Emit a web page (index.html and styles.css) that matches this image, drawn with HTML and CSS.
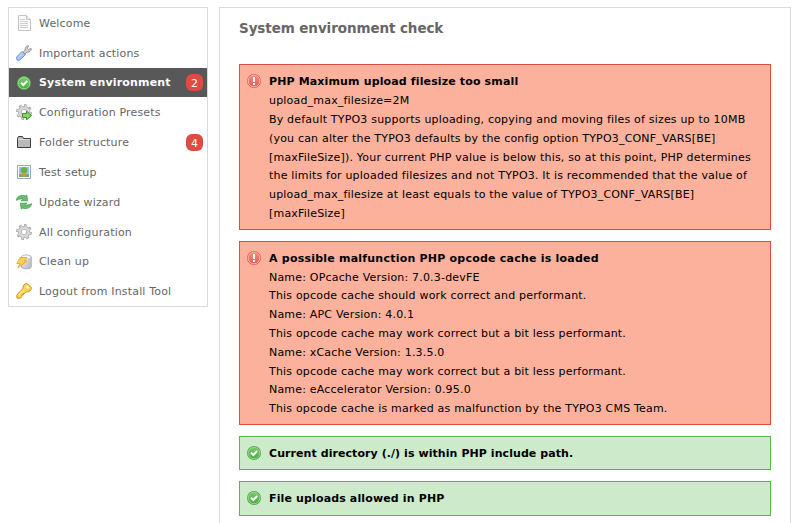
FILE: index.html
```html
<!DOCTYPE html>
<html lang="en">
<head>
<meta charset="utf-8">
<title>System environment check</title>
<link rel="stylesheet" href="styles.css">
</head>
<body>
<svg class="defs" width="0" height="0">
  <defs>
    <linearGradient id="green" x2="0" y2="1"><stop stop-color="#7bcc6c"/><stop offset="1" stop-color="#48ad3e"/></linearGradient>
    <linearGradient id="red" x2="0" y2="1"><stop stop-color="#f58b7c"/><stop offset="1" stop-color="#e45d50"/></linearGradient>
    <linearGradient id="grey" x2="1" y2="1"><stop stop-color="#f2f2f2"/><stop offset="1" stop-color="#b5b5b5"/></linearGradient>
    <linearGradient id="gold" x2="1" y2="1"><stop stop-color="#ffe77c"/><stop offset="1" stop-color="#f6c338"/></linearGradient>
    <symbol id="ok" viewBox="0 0 16 16"><circle cx="8" cy="8" r="7" fill="#52a74a"/><circle cx="8" cy="8" r="5.8" fill="url(#green)" stroke="#a5dc9b" stroke-width=".8"/><path d="M5 7.8 7.3 10 11.2 6" fill="none" stroke="#fff" stroke-width="2"/></symbol>
    <symbol id="error" viewBox="0 0 16 16"><circle cx="8" cy="8" r="7" fill="#db665b"/><circle cx="8" cy="8" r="5.8" fill="url(#red)" stroke="#f9b9ad" stroke-width=".9"/><path d="M8 4v5M8 10v2" stroke="#fff" stroke-width="2"/></symbol>
    <symbol id="gear" viewBox="0 0 16 16"><circle cx="8" cy="8" r="6.6" fill="none" stroke="#a3a3a3" stroke-width="2.6" stroke-dasharray="2.8 2.384"/><circle cx="8" cy="8" r="4.2" fill="none" stroke="#a3a3a3" stroke-width="4"/><circle cx="8" cy="8" r="6.2" fill="none" stroke="#d8d8d8" stroke-width="2" stroke-dasharray="1.6 3.27" stroke-dashoffset="-.5"/><circle cx="8" cy="8" r="4.1" fill="none" stroke="#d8d8d8" stroke-width="2.8"/></symbol>
  </defs>
</svg>
<div class="page">
  <ul class="menu">
    <li><svg viewBox="0 0 16 16"><path d="M2.5.5h8l4 4v11h-12z" fill="#fafafa" stroke="#c4c4c4"/><path d="M10.5.5v4h4" fill="#eee" stroke="#c4c4c4"/><path d="M4 4.5h5M4 6.5h8M4 8.5h8M4 10.5h8M4 12.5h8" stroke="#d0d0d0"/></svg><span>Welcome</span></li>
    <li><svg viewBox="0 0 16 16"><path d="m7.2 7.1 2-2c-.5-2 .8-4.2 3.3-4.3l-1.2 2.5 1.1 1.1 2.8-1c.3 2.8-2 4.2-4.2 3.6l-2 2z" fill="#d2d2d2" stroke="#8d8d8d" stroke-width=".9"/><path d="m6 6.4 3.4 3.4-5.6 5.1c-2 1.5-4.6-1-3.1-2.9z" fill="#a6c3f2" stroke="#668acb" stroke-width=".9"/><path d="m2.4 12.2 4.2-4" stroke="#d0e0fb"/></svg><span>Important actions</span></li>
    <li class="active"><svg viewBox="0 0 16 16"><use href="#ok"/></svg><span>System environment</span><b>2</b></li>
    <li><svg viewBox="0 0 16 16"><use href="#gear"/><path d="M6.5 9.5h4V7.1l5 4.4-5 4.3v-2.4h-4z" fill="#87d566" stroke="#398b2c"/></svg><span>Configuration Presets</span></li>
    <li><svg viewBox="0 0 16 16"><path d="M1.5 13.5v-9l1-2h4l1 2h7v9z" fill="#b9b9b9" stroke="#3e3e3e"/><path d="M2 5.5h12" stroke="#ddd"/></svg><span>Folder structure</span><b>4</b></li>
    <li><svg viewBox="0 0 16 16"><path d="M1.5 1.5h13v13h-13z" fill="#fff" stroke="#8eabd7"/><path d="M3 3h10v10H3z" fill="#9cc0ed"/><path d="M3 10h10v3H3z" fill="#78aa68"/><circle cx="8" cy="6.3" r="3.2" fill="#68b43f"/><path d="M7.2 9h1.6l1.4 2.2L8 13l-2.2-1.8z" fill="#e68a3e"/></svg><span>Test setup</span></li>
    <li><svg viewBox="0 0 16 16"><path id="arrow" d="M.6 6.4C.2 2.6 5.5.4 9.2 2l1.6-1 .8 5.8H5.2l2-1.5C4.8 4.6 2.2 5 .6 6.4z" fill="#6cbd74" stroke="#469c50" stroke-width=".8"/><use href="#arrow" transform="rotate(180 8 8)"/></svg><span>Update wizard</span></li>
    <li><svg viewBox="0 0 16 16"><use href="#gear"/></svg><span>All configuration</span></li>
    <li><svg viewBox="0 0 16 16"><path d="M5.5 2.5C7 .5 13 .5 15.2 2.5v10.8c-2 2-8 2-9.7 0z" fill="url(#grey)" stroke="#ababab"/><ellipse cx="10.4" cy="3" rx="4" ry="1.4" fill="#f7f7f7"/><path d="M4 3.5h7L8.2 7H11L1.8 14l2.1-4.5H.7z" fill="#ffd04a" stroke="#dda63a" stroke-width=".8"/></svg><span>Clean up</span></li>
    <li><svg viewBox="0 0 16 16"><path d="M7.1 5.2C6.7 2.4 8.5.5 11 .6l4.3 3.8c.4 2.7-2 5-4.8 4.4L9 10.3H7.4v1.6H5.8v1.7L4 15.2H1L.8 12.1z" fill="url(#gold)" stroke="#cd8e1b"/><path d="m10.8 3.3 1.7 1.7" stroke="#fff" stroke-width="2"/><path d="m2.4 12.3 5-5.2" stroke="#fff2a9"/></svg><span>Logout from Install Tool</span></li>
  </ul>
  <main>
    <h1>System environment check</h1>
    <section class="message error"><svg viewBox="0 0 16 16"><use href="#error"/></svg><div><h2>PHP Maximum upload filesize too small</h2>
      <p>upload_max_filesize=2M<br>By default TYPO3 supports uploading, copying and moving files of sizes up to 10MB<br>(you can alter the TYPO3 defaults by the config option TYPO3_CONF_VARS[BE]<br>[maxFileSize]). Your current PHP value is below this, so at this point, PHP determines<br>the limits for uploaded filesizes and not TYPO3. It is recommended that the value of<br>upload_max_filesize at least equals to the value of TYPO3_CONF_VARS[BE]<br>[maxFileSize]</p></div></section>
    <section class="message error"><svg viewBox="0 0 16 16"><use href="#error"/></svg><div><h2 class="wide">A possible malfunction PHP opcode cache is loaded</h2>
      <p>Name: OPcache Version: 7.0.3-devFE<br>This opcode cache should work correct and performant.<br>Name: APC Version: 4.0.1<br>This opcode cache may work correct but a bit less performant.<br>Name: xCache Version: 1.3.5.0<br>This opcode cache may work correct but a bit less performant.<br>Name: eAccelerator Version: 0.95.0<br>This opcode cache is marked as malfunction by the TYPO3 CMS Team.</p></div></section>
    <section class="message ok"><svg viewBox="0 0 16 16"><use href="#ok"/></svg><h2 class="narrow">Current directory (./) is within PHP include path.</h2></section>
    <section class="message ok"><svg viewBox="0 0 16 16"><use href="#ok"/></svg><h2>File uploads allowed in PHP</h2></section>
  </main>
</div>
</body>
</html>
```
FILE: styles.css
```css
* { box-sizing: border-box; }
html { overflow: hidden; }
body {
  margin: 0;
  background: #fff;
  color: #000;
  font: 11px/18.8px "DejaVu Sans", Verdana, sans-serif;
}
.defs { display: block; }
.page {
  display: flex;
  align-items: flex-start;
  gap: 11px;
  padding: 7px 0 0 8px;
}
.menu {
  width: 200px;
  margin: 0;
  padding: 0;
  border: 1px solid #d9d9d9;
  list-style: none;
  letter-spacing: .17px;
}
.menu li {
  display: flex;
  align-items: center;
  height: 29.84px;
  padding: 0 4px 0 7px;
  color: #666;
}
.menu span { padding-top: 2.6px; }
.menu svg { width: 16px; height: 16px; margin-right: 7px; }
.menu .active { background: #585858; color: #fff; font-weight: bold; }
.menu b {
  width: 17px;
  height: 17px;
  margin-left: auto;
  border-radius: 6px;
  background: #dd4b42;
  color: #fff;
  font-weight: normal;
  line-height: 19px;
  text-align: center;
}
main {
  width: 572px;
  height: 540px;
  padding: 11px 19px;
  border: 1px solid #d9d9d9;
}
h1 {
  margin: 0 0 26.4px;
  color: #666;
  font-size: 13.5px;
  line-height: 19px;
  letter-spacing: -.09px;
}
h2 { margin: 0; font-size: 11px; line-height: inherit; letter-spacing: .14px; }
.wide { letter-spacing: .22px; }
.narrow { letter-spacing: .07px; }
p { margin: 0; letter-spacing: .19px; }
.message {
  display: flex;
  margin-bottom: 11px;
  padding: 8px 6px 5px;
  border: 1px solid;
}
.message:last-child { padding-bottom: 6px; }
.message svg { flex: none; width: 16px; height: 16px; margin: 0 7px 0 0; }
.error { border-color: #dc4c42; background: #fbb19b; }
.ok { border-color: #58b548; background: #cdeaca; }
```
